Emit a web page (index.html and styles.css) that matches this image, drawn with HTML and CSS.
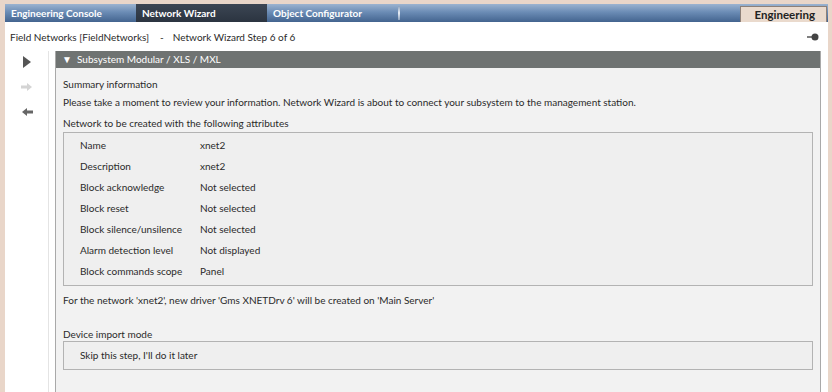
FILE: index.html
```html
<!DOCTYPE html>
<html lang="en">
<head>
  <meta charset="UTF-8" />
  <title>Network Wizard</title>
  <link rel="stylesheet" href="styles.css">
</head>
<body>
  <div class="app">
    <div class="tabbar">
      <div class="tab">Engineering Console</div>
      <div class="tab active">Network Wizard</div>
      <div class="tab">Object Configurator</div>
      <div class="tab-sep"></div>
      <div class="tab-fill"></div>
      <div class="mode-box">Engineering</div>
    </div>
    <div class="main">
      <div class="breadcrumb">
        <span>Field Networks [FieldNetworks]</span>
        <span class="dash">-</span>
        <span>Network Wizard Step 6 of 6</span>
        <svg class="pin" width="12" height="8" viewBox="0 0 12 8">
          <line x1="0" y1="4" x2="6" y2="4" stroke="#555" stroke-width="1.5"/>
          <circle cx="8" cy="4" r="3.5" fill="#444"/>
        </svg>
      </div>
      <div class="work">
        <div class="sidebar">
          <svg class="nav-icon" width="10" height="14" viewBox="0 0 10 14">
            <polygon points="1,1 9,7 1,13" fill="#555"/>
          </svg>
          <svg class="nav-icon" width="12" height="10" viewBox="0 0 12 10">
            <polygon points="0,3.5 6,3.5 6,1 11,5 6,9 6,6.5 0,6.5" fill="#d4d4d4"/>
          </svg>
          <svg class="nav-icon" width="12" height="10" viewBox="0 0 12 10">
            <polygon points="12,3.5 6,3.5 6,1 1,5 6,9 6,6.5 12,6.5" fill="#666"/>
          </svg>
        </div>
        <div class="panel">
          <div class="panel-header">&#9660;&nbsp;&nbsp;Subsystem Modular / XLS / MXL</div>
          <div class="panel-body">
            <div class="line">Summary information</div>
            <div class="line">Please take a moment to review your information. Network Wizard is about to connect your subsystem to the management station.</div>
            <div class="line group-title">Network to be created with the following attributes</div>
            <div class="box attrs">
              <div class="attr"><span class="attr-label">Name</span><span>xnet2</span></div>
              <div class="attr"><span class="attr-label">Description</span><span>xnet2</span></div>
              <div class="attr"><span class="attr-label">Block acknowledge</span><span>Not selected</span></div>
              <div class="attr"><span class="attr-label">Block reset</span><span>Not selected</span></div>
              <div class="attr"><span class="attr-label">Block silence/unsilence</span><span>Not selected</span></div>
              <div class="attr"><span class="attr-label">Alarm detection level</span><span>Not displayed</span></div>
              <div class="attr"><span class="attr-label">Block commands scope</span><span>Panel</span></div>
            </div>
            <div class="line note">For the network 'xnet2', new driver 'Gms XNETDrv 6' will be created on 'Main Server'</div>
            <div class="line import">Device import mode</div>
            <div class="box import-box">Skip this step, I'll do it later</div>
          </div>
        </div>
      </div>
    </div>
  </div>
</body>
</html>
```

FILE: styles.css
```css
body {
  margin: 0;
  background: #e9d6c9;
  font-family: Lato, "Open Sans", sans-serif;
  font-size: 10px;
  color: #2a2a2a;
  height: 392px;
  overflow: hidden;
}
.app {
  margin: 4px 4px 0 5px;
  display: flex;
  flex-direction: column;
  height: 388px;
}
.tabbar {
  height: 18px;
  display: flex;
  align-items: stretch;
  background: linear-gradient(#9bb3d0, #6b8cb5 45%, #43648f);
}
.tab {
  width: 131px;
  box-sizing: border-box;
  padding-left: 6px;
  color: #fff;
  font-weight: bold;
  font-size: 10px;
  line-height: 18px;
  white-space: nowrap;
}
.tab.active {
  background: linear-gradient(#3c4654, #2b3440);
}
.tab-sep {
  width: 2px;
  margin: 2px 0;
  background: linear-gradient(#8aa0bc, #e8eef6 50%, #8aa0bc);
}
.tab-fill {
  flex: 1;
}
.mode-box {
  width: 87px;
  box-sizing: border-box;
  margin: 2px 1px 0 0;
  background: #eadacd;
  border: 1px solid #8d8078;
  border-bottom: none;
  text-align: right;
  padding-right: 11px;
  font-weight: bold;
  font-size: 11.5px;
  line-height: 15px;
  color: #222;
}
.main {
  flex: 1;
  background: #fff;
  display: flex;
  flex-direction: column;
}
.breadcrumb {
  height: 29px;
  display: flex;
  align-items: center;
  padding-left: 5px;
}
.breadcrumb .dash {
  margin: 0 9px 0 11px;
}
.pin {
  margin-left: auto;
  margin-right: 9px;
}
.work {
  flex: 1;
  display: flex;
}
.sidebar {
  width: 43px;
  border-right: 1px solid #e4e4e4;
  display: flex;
  flex-direction: column;
  align-items: center;
  padding-top: 4px;
  gap: 11px;
}
.nav-icon {
  height: 14px;
}
.panel {
  flex: 1;
  margin: 0 7px 0 6px;
  border-left: 1px solid #a9a9a9;
  border-right: 1px solid #a9a9a9;
  background: #f2f2f2;
}
.panel-header {
  height: 17px;
  line-height: 17px;
  background: #6f7372;
  color: #fff;
  padding-left: 6px;
}
.panel-body {
  padding: 7px 7px 0 7px;
}
.line {
  line-height: 18px;
}
.group-title {
  margin-top: 3px;
}
.box {
  border: 1px solid #b3b3b3;
  background: #efefef;
}
.attrs {
  padding: 2px 0 3px 16px;
}
.attr {
  display: flex;
  line-height: 21px;
}
.attr-label {
  width: 120px;
}
.note {
  margin-top: 5px;
}
.import {
  margin-top: 18px;
  line-height: 14px;
}
.import-box {
  height: 29px;
  box-sizing: border-box;
  line-height: 26px;
  padding-left: 16px;
}
```
